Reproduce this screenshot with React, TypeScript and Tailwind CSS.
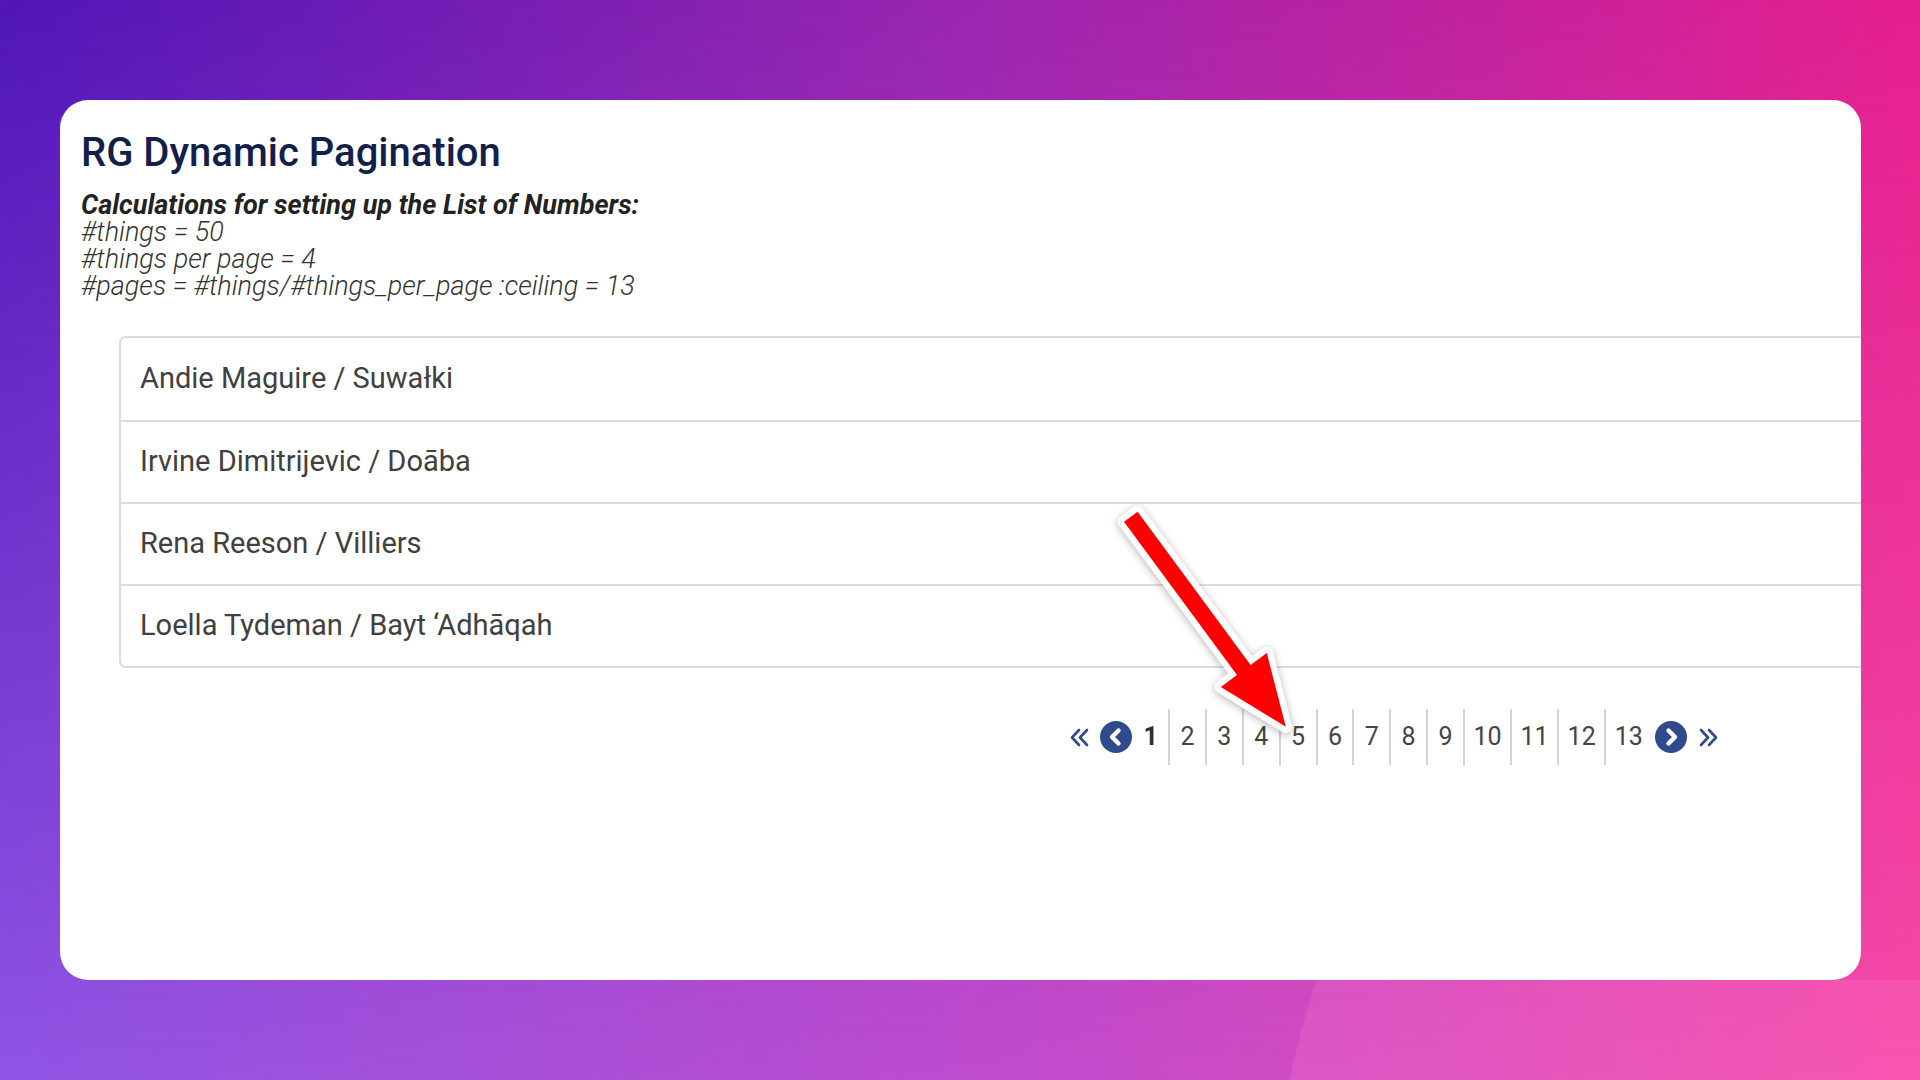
import { ReactNode } from 'react';

const rows = [
  'Andie Maguire / Suwałki',
  'Irvine Dimitrijevic / Doāba',
  'Rena Reeson / Villiers',
  'Loella Tydeman / Bayt ‘Adhāqah',
];

/* ── Icons ─────────────────────────────────────────────────────────────── */
function DoubleChevron({ dir }: { dir: 'left' | 'right' }) {
  const d =
    dir === 'left'
      ? 'M10 2 L3 9.5 L10 17 M18 2 L11 9.5 L18 17'
      : 'M3 2 L10 9.5 L3 17 M11 2 L18 9.5 L11 17';
  return (
    <svg width="21" height="19" viewBox="0 0 21 19" fill="none">
      <path d={d} stroke="#2f4a8f" strokeWidth="2.6" strokeLinecap="round" strokeLinejoin="round" />
    </svg>
  );
}

function CircleChevron({ dir }: { dir: 'left' | 'right' }) {
  const d = dir === 'left' ? 'M18.5 9.5 L12 16 L18.5 22.5' : 'M13.5 9.5 L20 16 L13.5 22.5';
  return (
    <svg width="32" height="32" viewBox="0 0 32 32">
      <circle cx="16" cy="16" r="16" fill="#2f4a8f" />
      <path d={d} stroke="#fff" strokeWidth="4.4" fill="none" strokeLinecap="round" strokeLinejoin="round" />
    </svg>
  );
}

function PageCell({ n, first, active }: { n: number; first?: boolean; active?: boolean }) {
  return (
    <div
      className={`h-[56px] flex items-center ${n >= 10 ? 'px-[8.5px]' : 'px-[10.4px]'} ${
        first ? '' : 'border-l-2 border-[#d4d4d4]'
      } ${active ? 'font-bold text-[#2e2e2e]' : 'text-[#444]'}`}
    >
      {n}
    </div>
  );
}

function Line({ children, bold }: { children: ReactNode; bold?: boolean }) {
  return <div className={bold ? 'font-bold text-[#222]' : 'font-light text-[#333]'}>{children}</div>;
}

/* ── Annotation arrow ──────────────────────────────────────────────────── */
function RedArrow() {
  return (
    <svg className="absolute left-0 top-0 pointer-events-none" width="1920" height="1080">
      <defs>
        <filter id="arrowShadow" x="-20%" y="-20%" width="140%" height="140%">
          <feDropShadow dx="0" dy="2" stdDeviation="4" floodColor="#000" floodOpacity="0.3" />
        </filter>
      </defs>
      <polygon
        points="1137.6,511.7 1250.6,664.9 1266.8,652.9 1285.8,726.8 1220.8,686.9 1237,674.9 1124,521.7"
        fill="#ff0000"
        stroke="#fff"
        strokeWidth="12"
        strokeLinejoin="round"
        paintOrder="stroke"
        filter="url(#arrowShadow)"
      />
    </svg>
  );
}

export default function App() {
  return (
    <div
      className="relative w-[1920px] h-[1080px] overflow-hidden bg-[linear-gradient(to_right,#5016b8_0%,#9a26b0_50%,#e61f8e_100%)]"
      style={{ fontFamily: 'Roboto, "Liberation Sans", sans-serif' }}
    >
      {/* lower gradient layer */}
      <div className="absolute inset-0 bg-[linear-gradient(to_right,#8f55e4_0%,#c24ccc_55%,#f74aa6_100%)] [mask-image:linear-gradient(to_bottom,transparent_0%,black_100%)]" />
      {/* soft decorative blob, only below the card */}
      <div className="absolute left-0 top-[980px] w-[1920px] h-[100px] overflow-hidden">
        <div className="absolute left-[1260px] top-[-837px] w-[2400px] h-[2400px] rounded-full bg-[#ff86d6]/20" />
      </div>

      <div className="relative pt-[100px] pl-[60px]">
        <div className="w-[1801px] h-[880px] bg-white rounded-[28px] overflow-hidden pt-[29px] pl-[21px]">
          <h1 className="text-[40px] leading-[48px] font-medium text-[#121f4a]">RG Dynamic Pagination</h1>

          <div className="mt-[15px] text-[27px] leading-[27px] italic">
            <Line bold>Calculations for setting up the List of Numbers:</Line>
            <Line>#things = 50</Line>
            <Line>#things per page = 4</Line>
            <Line>#pages = #things/#things_per_page :ceiling = 13</Line>
          </div>

          <div className="mt-[36px] ml-[38px] w-[1800px] border-2 border-[#dcdcdc] rounded-[7px]">
            {rows.map((r, i) => (
              <div
                key={r}
                className={`h-[82px] flex items-center px-[19px] text-[29px] text-[#404040] ${
                  i > 0 ? 'border-t-2 border-[#dcdcdc]' : ''
                }`}
              >
                {r}
              </div>
            ))}
          </div>

          <div className="mt-[41px] ml-[988px] flex items-center text-[25px]">
            <DoubleChevron dir="left" />
            <div className="ml-[10px]">
              <CircleChevron dir="left" />
            </div>
            <div className="ml-[1px] flex items-center">
              {Array.from({ length: 13 }, (_, i) => (
                <PageCell key={i} n={i + 1} first={i === 0} active={i === 0} />
              ))}
            </div>
            <div className="ml-[4px]">
              <CircleChevron dir="right" />
            </div>
            <div className="ml-[11px]">
              <DoubleChevron dir="right" />
            </div>
          </div>
        </div>
      </div>

      <RedArrow />
    </div>
  );
}
